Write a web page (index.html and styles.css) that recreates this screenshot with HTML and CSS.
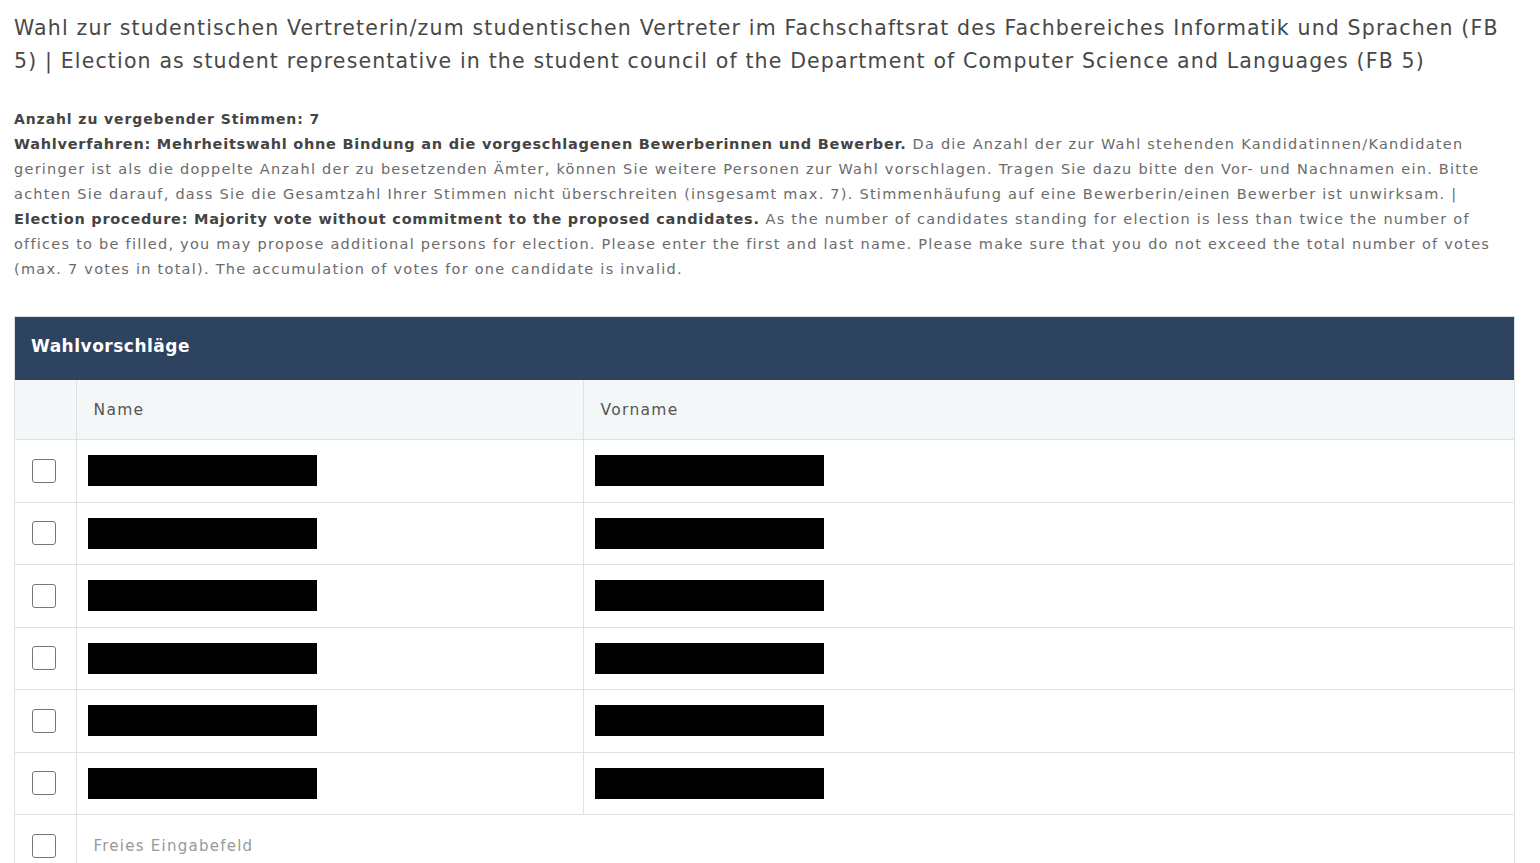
FILE: index.html
```html
<!DOCTYPE html>
<html lang="de">
<head>
<meta charset="utf-8">
<title>Wahl</title>
<link rel="stylesheet" href="styles.css">
</head>
<body>
<main class="page">
  <h1 class="title">Wahl zur studentischen Vertreterin/zum studentischen Vertreter im Fachschaftsrat des Fachbereiches Informatik und Sprachen (FB 5) | Election as student representative in the student council of the Department of Computer Science and Languages (FB 5)</h1>
  <div class="info">
    <p class="votes">Anzahl zu vergebender Stimmen: 7</p>
    <p class="desc"><strong>Wahlverfahren: Mehrheitswahl ohne Bindung an die vorgeschlagenen Bewerberinnen und Bewerber.</strong> Da die Anzahl der zur Wahl stehenden Kandidatinnen/Kandidaten<br>geringer ist als die doppelte Anzahl der zu besetzenden Ämter, können Sie weitere Personen zur Wahl vorschlagen. Tragen Sie dazu bitte den Vor- und Nachnamen ein. Bitte<br>achten Sie darauf, dass Sie die Gesamtzahl Ihrer Stimmen nicht überschreiten (insgesamt max. 7). Stimmenhäufung auf eine Bewerberin/einen Bewerber ist unwirksam. |<br><strong>Election procedure: Majority vote without commitment to the proposed candidates.</strong> As the number of candidates standing for election is less than twice the number of<br>offices to be filled, you may propose additional persons for election. Please enter the first and last name. Please make sure that you do not exceed the total number of votes<br>(max. 7 votes in total). The accumulation of votes for one candidate is invalid.</p>
  </div>
  <section class="card">
    <div class="card-head">Wahlvorschläge</div>
    <table class="ballot">
      <colgroup><col class="col-check"><col class="col-name"><col></colgroup>
      <thead>
        <tr><th></th><th>Name</th><th>Vorname</th></tr>
      </thead>
      <tbody>
        <tr><td class="c-check"><span class="box"></span></td><td><span class="redact"></span></td><td><span class="redact"></span></td></tr>
        <tr><td class="c-check"><span class="box"></span></td><td><span class="redact"></span></td><td><span class="redact"></span></td></tr>
        <tr><td class="c-check"><span class="box"></span></td><td><span class="redact"></span></td><td><span class="redact"></span></td></tr>
        <tr><td class="c-check"><span class="box"></span></td><td><span class="redact"></span></td><td><span class="redact"></span></td></tr>
        <tr><td class="c-check"><span class="box"></span></td><td><span class="redact"></span></td><td><span class="redact"></span></td></tr>
        <tr><td class="c-check"><span class="box"></span></td><td><span class="redact"></span></td><td><span class="redact"></span></td></tr>
        <tr><td class="c-check"><span class="box"></span></td><td colspan="2" class="free">Freies Eingabefeld</td></tr>
      </tbody>
    </table>
  </section>
</main>
</body>
</html>
```
FILE: styles.css
```css
html, body {
  margin: 0;
  padding: 0;
  background: #ffffff;
}
body {
  font-family: "DejaVu Sans", "Noto Sans", sans-serif;
  color: #555;
}
.page {
  padding: 12px 25px 0 14px;
}
.title {
  margin: 0;
  font-size: 20.5px;
  line-height: 33px;
  font-weight: normal;
  letter-spacing: 1.15px;
  color: #484848;
}
.info {
  margin-top: 29px;
}
.votes {
  margin: 0;
  font-size: 14px;
  line-height: 25px;
  font-weight: bold;
  letter-spacing: 0.9px;
  color: #444;
}
.desc {
  margin: 0;
  font-size: 14.5px;
  line-height: 25px;
  letter-spacing: 1.25px;
  color: #6b6b6b;
  white-space: nowrap;
}
.desc strong {
  color: #444;
  letter-spacing: 0.75px;
}
.card {
  margin-top: 34px;
  border: 1px solid #dde2e6;
}
.card-head {
  background: #2e4360;
  color: #fff;
  font-weight: bold;
  font-size: 17px;
  letter-spacing: 0.5px;
  height: 63px;
  line-height: 58px;
  padding-left: 16px;
}
.ballot {
  width: 100%;
  border-collapse: collapse;
  table-layout: fixed;
}
.col-check { width: 61px; }
.col-name { width: 507px; }
.ballot th, .ballot td {
  border: 1px solid #dde2e6;
  text-align: left;
  vertical-align: middle;
}
.ballot tr > :first-child { border-left: none; }
.ballot tr > :last-child { border-right: none; }
.ballot thead tr > * { border-top: none; }
.ballot tbody tr:last-child td { border-bottom: none; }
.ballot thead th {
  background: #f4f7f8;
  height: 59px;
  font-weight: normal;
  font-size: 15.5px;
  letter-spacing: 1.3px;
  color: #555;
  padding: 0 17px;
}
.ballot td {
  height: 61.5px;
  padding: 0 11px;
}
.ballot td.c-check { padding: 0 0 0 17px; }
.box {
  display: block;
  width: 24px;
  height: 24px;
  border: 1.5px solid #777;
  border-radius: 3px;
  box-sizing: border-box;
}
.redact {
  display: block;
  width: 229px;
  height: 31px;
  background: #000;
}
.ballot td.free {
  padding-left: 17px;
  color: #999;
  font-size: 15px;
  letter-spacing: 1.25px;
}
```
